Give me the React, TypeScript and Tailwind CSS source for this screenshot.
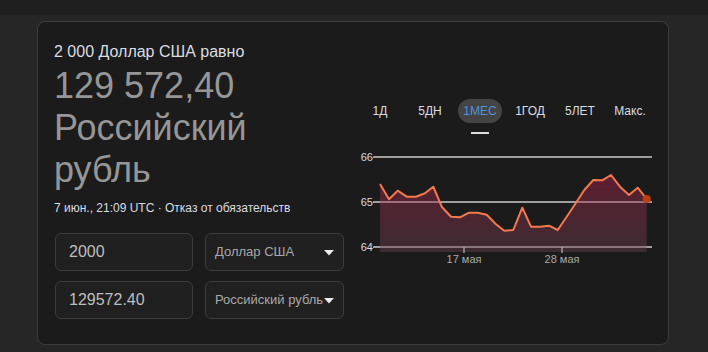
import React from "react";

const tabs = ["1Д", "5ДН", "1МЕС", "1ГОД", "5ЛЕТ", "Макс."];

// chart points in page coordinates (svg viewBox is offset to match)
const points: [number, number][] = [
  [380, 184], [389, 199.3], [397.7, 190.7], [406.7, 196.7], [416, 196.7],
  [425, 193.3], [433.3, 186.7], [441.7, 206.7], [451, 216.7], [460, 217.3],
  [469, 212.7], [477.7, 212.7], [486.7, 214.7], [495.7, 224], [504.3, 230.7],
  [513.3, 230], [522.3, 207.7], [531, 226.7], [540, 226.7], [549, 225.7],
  [557.7, 230], [566.7, 216.7], [575.7, 203.3], [584.3, 190], [593.3, 180],
  [602.3, 180.3], [611, 175], [620, 186.7], [629, 195], [637.7, 187.7],
  [646.7, 199],
];

const linePath = points.map((p, i) => `${i ? "L" : "M"}${p[0]} ${p[1]}`).join(" ");
const fillPath = `${linePath} L646.7 252 L380 252 Z`;

const Caret = () => (
  <svg width="10" height="6" viewBox="0 0 10 6" className="absolute right-[9px] top-[16px]">
    <path d="M0 0 L10 0 L5 5.5 Z" fill="#e8eaed" />
  </svg>
);

const Field = ({ value }: { value: string }) => (
  <div className="w-[138px] h-[38px] rounded-[6px] border border-[#3c3c3c] bg-[#202020] flex items-center pl-[13px] text-[16px] text-[#bdbdbd]">
    {value}
  </div>
);

const Select = ({ label }: { label: string }) => (
  <div className="relative w-[139px] h-[38px] rounded-[6px] border border-[#3c3c3c] bg-[#202020]">
    <div className="h-full flex items-center pl-[9px] pr-[12px] overflow-hidden whitespace-nowrap text-[13px] text-[#a8a8a8]">
      {label}
    </div>
    <Caret />
  </div>
);

const Chart = () => (
  <svg width="305" height="125" viewBox="355 145 305 125" className="mt-[11px] block">
    <defs>
      <linearGradient id="area" gradientUnits="userSpaceOnUse" x1="0" y1="175" x2="0" y2="252">
        <stop offset="0" stopColor="#b82250" stopOpacity="0.42" />
        <stop offset="1" stopColor="#6b4350" stopOpacity="0.42" />
      </linearGradient>
    </defs>
    {[157, 202, 247].map((y) => (
      <line key={y} x1="373" x2="652" y1={y} y2={y} stroke="#9e9e9e" strokeWidth="2" />
    ))}
    {[
      ["66", 157],
      ["65", 202],
      ["64", 247],
    ].map(([t, y]) => (
      <text
        key={t as string}
        x="373"
        y={(y as number) + 4}
        textAnchor="end"
        fontSize="11"
        fontFamily="'Liberation Sans', Arial, sans-serif"
        fill="#dadce0"
      >
        {t}
      </text>
    ))}
    <path d={fillPath} fill="url(#area)" />
    <path d={linePath} fill="none" stroke="#f27a4d" strokeWidth="2" strokeLinejoin="round" />
    <circle cx="646.7" cy="199" r="4" fill="#bf3d10" />
    {[
      ["17 мая", 464],
      ["28 мая", 562],
    ].map(([t, x]) => (
      <g key={t as string}>
        <line x1={x} x2={x} y1="247" y2="253" stroke="#9e9e9e" strokeWidth="1.5" />
        <text
          x={x}
          y="263"
          textAnchor="middle"
          fontSize="11"
          fontFamily="'Liberation Sans', Arial, sans-serif"
          fill="#aaaaaa"
        >
          {t}
        </text>
      </g>
    ))}
  </svg>
);

export default function App() {
  return (
    <div className="w-[708px] h-[352px] overflow-hidden bg-[#262626] font-['Liberation_Sans',Arial,sans-serif]">
      <div className="h-[15px] bg-[#1f1f1f]" />
      <div className="ml-[37px] mt-[6px] w-[632px] h-[324px] rounded-[8px] border border-[#3c3c3c] bg-[#1b1b1b] flex pt-[20px] pl-[16px]">
        {/* left side: result text and converter */}
        <div className="w-[290px] flex flex-col">
          <div className="text-[16px] leading-[20px] text-[#dadce0]">2 000 Доллар США равно</div>
          <div className="mt-[3px] text-[36px] leading-[42px] text-[#969696]">
            <div>129 572,40</div>
            <div>Российский</div>
            <div>рубль</div>
          </div>
          <div className="mt-[9px] text-[12px] leading-[16px] text-[#dadce0]">
            7 июн., 21:09 UTC · Отказ от обязательств
          </div>
          <div className="mt-[17px] ml-px grid grid-cols-[138px_139px] gap-x-[12px] gap-y-[10px]">
            <Field value="2000" />
            <Select label="Доллар США" />
            <Field value="129572.40" />
            <Select label="Российский рубль" />
          </div>
        </div>

        {/* right side: range tabs and chart */}
        <div className="ml-[11px] w-[305px] mt-[57px]">
          <div className="grid grid-cols-[repeat(6,50px)] h-[24px]">
            {tabs.map((t) => (
              <div key={t} className="flex justify-center">
                {t === "1МЕС" ? (
                  <div className="w-[44px] h-[24px] rounded-full bg-[#444444] flex items-center justify-center text-[12px] text-[#4f94d8]">
                    {t}
                  </div>
                ) : (
                  <div className="h-[24px] flex items-center text-[12px] text-[#dadce0]">{t}</div>
                )}
              </div>
            ))}
          </div>
          <div className="grid grid-cols-[repeat(6,50px)] mt-[9px]">
            <div />
            <div />
            <div className="flex justify-center">
              <div className="w-[18px] h-[2px] bg-[#dadce0]" />
            </div>
          </div>
          <Chart />
        </div>
      </div>
    </div>
  );
}
